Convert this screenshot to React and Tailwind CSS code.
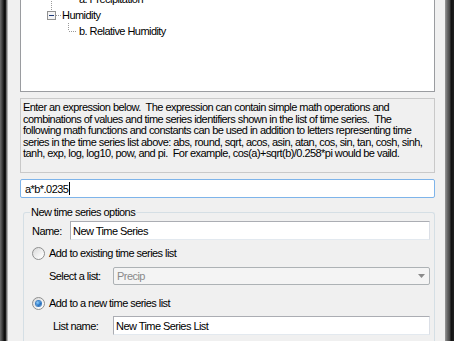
import React from "react";

function Dots({ x1, y1, x2, y2 }) {
  return (
    <line
      x1={x1}
      y1={y1}
      x2={x2}
      y2={y2}
      stroke="#9a9a9a"
      strokeWidth="1"
      strokeDasharray="1 1"
      shapeRendering="crispEdges"
    />
  );
}

function Radio({ checked }) {
  return (
    <span className="flex h-[13px] w-[13px] shrink-0 items-center justify-center rounded-full border border-[#8e8f8f] bg-[linear-gradient(135deg,#d8d8d8,#f7f7f7_70%,#ffffff)]">
      {checked && (
        <span className="h-[5px] w-[5px] rounded-full bg-[radial-gradient(circle_at_35%_35%,#8ed0ff,#1f6fc2_60%,#0f3f80)] shadow-[0_0_0_1px_#3d7fc4]" />
      )}
    </span>
  );
}

export default function App() {
  return (
    <div className="flex h-[341px] w-[454px] overflow-hidden bg-[#f0f0f0] font-['Liberation_Sans',Arial,sans-serif] text-[11px] leading-[16px] tracking-[-0.55px] text-black">
      {/* left window frame */}
      <div className="w-[8px] shrink-0 bg-[linear-gradient(to_right,#6e6e6e,#3a3a3a_30%,#0c0c0c_55%,#1a1a1a_70%,#8a8a8a_85%,#cfcfcf)]" />

      {/* main */}
      <div className="flex min-w-0 flex-1 flex-col pl-[12px] pr-[10px]">
        {/* tree view */}
        <div className="h-[92px] shrink-0 overflow-hidden border-x border-b border-[#9a9ca0] bg-white">
          <div className="-mt-[9px] flex flex-col">
            <div className="flex h-[16px] items-center">
              <svg width="58" height="16" className="shrink-0">
                <Dots x1={30.5} y1={0} x2={30.5} y2={16} />
                <Dots x1={47.5} y1={0} x2={47.5} y2={8} />
                <Dots x1={47.5} y1={8.5} x2={56} y2={8.5} />
              </svg>
              <span className="whitespace-pre">a. Precipitation</span>
            </div>
            <div className="flex h-[16px] items-center">
              <svg width="41" height="16" className="shrink-0">
                <Dots x1={30.5} y1={0} x2={30.5} y2={4} />
                <rect x="26.5" y="4.5" width="8" height="8" fill="#f4f4f4" stroke="#919191" shapeRendering="crispEdges" />
                <line x1="28" y1="8.5" x2="33" y2="8.5" stroke="#1d3a7a" shapeRendering="crispEdges" />
                <Dots x1={35} y1={8.5} x2={40} y2={8.5} />
              </svg>
              <span className="whitespace-pre">Humidity</span>
            </div>
            <div className="flex h-[16px] items-center">
              <svg width="58" height="16" className="shrink-0">
                <Dots x1={47.5} y1={0} x2={47.5} y2={8} />
                <Dots x1={47.5} y1={8.5} x2={56} y2={8.5} />
              </svg>
              <span className="whitespace-pre">b. Relative Humidity</span>
            </div>
          </div>
        </div>

        {/* description */}
        <div className="mt-[6px] h-[75px] shrink-0 border border-[#c9c9c9] bg-[#f0f0f0] pl-[2px] pt-[3px] leading-[11.6px] whitespace-pre">
          <div>Enter an expression below.  The expression can contain simple math operations and</div>
          <div>combinations of values and time series identifiers shown in the list of time series.  The</div>
          <div>following math functions and constants can be used in addition to letters representing time</div>
          <div>series in the time series list above: abs, round, sqrt, acos, asin, atan, cos, sin, tan, cosh, sinh,</div>
          <div>tanh, exp, log, log10, pow, and pi.  For example, cos(a)+sqrt(b)/0.258*pi would be vaild.</div>
        </div>

        {/* expression input */}
        <div className="mt-[6px] flex h-[19px] shrink-0 items-center rounded-[2px] border border-[#7eb4ea] bg-white pl-[4px]">
          <span className="whitespace-pre">a*b*.0235</span>
          <span className="ml-[1px] h-[13px] w-[1px] bg-black" />
        </div>

        {/* group box */}
        <div className="relative ml-[3px] mt-[14px] flex flex-1 flex-col rounded-t-[3px] border-x border-t border-[#d5dfe5] pl-[8px] pr-[4px] pt-[8px]">
          <span className="absolute -top-[9px] left-[6px] bg-[#f0f0f0] px-[1px] whitespace-pre">New time series options</span>

          <div className="flex h-[19px] items-center">
            <span className="w-[38px] shrink-0 whitespace-pre">Name:</span>
            <div className="flex h-[19px] flex-1 items-center border border-[#abadb3] border-b-[#e3e9ef] border-r-[#dbdfe6] bg-white pl-[2px]">
              <span className="whitespace-pre">New Time Series</span>
            </div>
          </div>

          <div className="mt-[5px] flex h-[16px] items-center">
            <Radio />
            <span className="ml-[4px] whitespace-pre">Add to existing time series list</span>
          </div>

          <div className="mt-[6px] flex h-[18px] items-center pl-[17px]">
            <span className="w-[64px] shrink-0 whitespace-pre">Select a list:</span>
            <div className="flex h-[18px] flex-1 items-center justify-between rounded-[2px] border border-[#adb2b5] bg-[#f4f4f4] pl-[3px] pr-[4px]">
              <span className="whitespace-pre text-[#8a8a8a]">Precip</span>
              <svg width="7" height="4" className="shrink-0">
                <polygon points="0,0 7,0 3.5,4" fill="#8a8a8a" />
              </svg>
            </div>
          </div>

          <div className="mt-[10px] flex h-[16px] items-center">
            <Radio checked />
            <span className="ml-[4px] whitespace-pre">Add to a new time series list</span>
          </div>

          <div className="mt-[5px] flex h-[19px] items-center pl-[21px]">
            <span className="w-[60px] shrink-0 whitespace-pre">List name:</span>
            <div className="flex h-[19px] flex-1 items-center border border-[#abadb3] border-b-[#e3e9ef] border-r-[#dbdfe6] bg-white pl-[2px]">
              <span className="whitespace-pre">New Time Series List</span>
            </div>
          </div>

          <div className="mt-[7px] flex h-[19px] items-center pl-[81px]">
            <div className="h-[19px] flex-1 border border-[#abadb3] bg-white" />
          </div>
        </div>
      </div>

      {/* right window frame */}
      <div className="w-[9px] shrink-0 bg-[linear-gradient(to_right,#9a9a9a,#6a6a6a_25%,#4a4a4a_50%,#121212_70%,#1e1e1e)]" />
    </div>
  );
}
